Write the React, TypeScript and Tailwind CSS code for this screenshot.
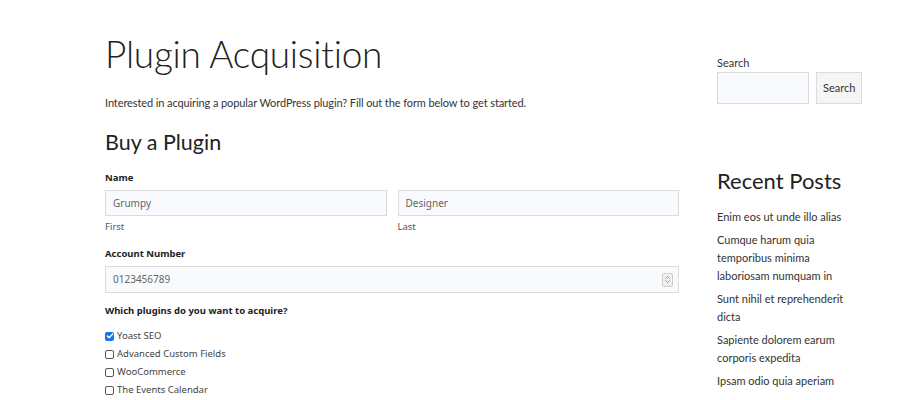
import { Check, ChevronsUpDown } from "lucide-react";

const plugins = [
  { label: "Yoast SEO", checked: true },
  { label: "Advanced Custom Fields", checked: false },
  { label: "WooCommerce", checked: false },
  { label: "The Events Calendar", checked: false },
];

const posts = [
  "Enim eos ut unde illo alias",
  "Cumque harum quia temporibus minima laboriosam numquam in",
  "Sunt nihil et reprehenderit dicta",
  "Sapiente dolorem earum corporis expedita",
  "Ipsam odio quia aperiam",
];

function Field({ value, className = "" }: { value: string; className?: string }) {
  return (
    <div
      className={`flex h-[26px] items-center border border-[#dcdcdc] bg-[#f8fafd] px-[7px] text-[10px] text-[#666] ${className}`}
    >
      {value}
    </div>
  );
}

export default function App() {
  return (
    <div className="h-[400px] w-[900px] overflow-hidden bg-white font-['Lato',sans-serif] text-[#333]">
      <div className="flex pl-[105px] pr-[38px]">

        <main className="w-[574px] pt-[30px]">
          <h1 className="text-[37px] font-light leading-[48px] tracking-[-0.25px] text-[#222]">
            Plugin Acquisition
          </h1>

          <p className="mt-[16px] text-[11px] leading-[18px] tracking-[-0.1px]">
            Interested in acquiring a popular WordPress plugin? Fill out the form below to get started.
          </p>

          <h2 className="mt-[16px] text-[21.5px] leading-[28px] text-[#222]">
            Buy a Plugin
          </h2>

          <div className="mt-[15px] font-['Noto_Sans',sans-serif]">
            <div className="text-[9.5px] font-bold leading-[14px] text-[#222]">Name</div>
            <div className="mt-[5px] grid grid-cols-2 gap-[11px]">
              <div>
                <Field value="Grumpy" />
                <div className="mt-[4px] text-[9.5px] leading-[14px] text-[#555]">First</div>
              </div>
              <div>
                <Field value="Designer" />
                <div className="mt-[4px] text-[9.5px] leading-[14px] text-[#555]">Last</div>
              </div>
            </div>

            <div className="mt-[13px] text-[9.5px] font-bold leading-[14px] text-[#222]">
              Account Number
            </div>
            <div className="mt-[5px] flex h-[27px] items-center justify-between border border-[#dcdcdc] bg-[#f8fafd] pl-[7px] pr-[5px] text-[10px] text-[#666]">
              <span>0123456789</span>
              <span className="flex h-[14px] w-[11px] items-center justify-center rounded-[2px] border border-[#ccc] bg-[#f0f0f0]">
                <ChevronsUpDown className="h-[9px] w-[9px] text-[#777]" strokeWidth={2} />
              </span>
            </div>

            <div className="mt-[11px] text-[9.5px] font-bold leading-[14px] text-[#222]">
              Which plugins do you want to acquire?
            </div>
            <div className="mt-[9px] flex flex-col">
              {plugins.map((p) => (
                <label key={p.label} className="flex h-[18px] items-center gap-[3px] text-[9.5px] text-[#444]">
                  {p.checked ? (
                    <span className="flex h-[9px] w-[9px] items-center justify-center rounded-[2px] bg-[#1a73e8]">
                      <Check className="h-[8px] w-[8px] text-white" strokeWidth={4} />
                    </span>
                  ) : (
                    <span className="h-[9px] w-[9px] rounded-[2px] border border-[#555] bg-white" />
                  )}
                  {p.label}
                </label>
              ))}
            </div>
          </div>
        </main>

        <aside className="ml-[38px] w-[145px] pt-[56px]">
          <div className="text-[11px] leading-[14px] text-[#333]">Search</div>
          <div className="mt-[2px] flex gap-[7px]">
            <div className="h-[32px] w-[93px] border border-[#dcdcdc] bg-[#f8fafd]" />
            <button className="h-[32px] w-[46px] border border-[#dcdcdc] bg-[#f5f5f5] text-[11px] text-[#333]">
              Search
            </button>
          </div>

          <h2 className="mt-[63px] text-[22px] leading-[28px] text-[#222]">Recent Posts</h2>

          <ul className="mt-[13px] flex flex-col gap-[5px] text-[11px] leading-[18px] text-[#333]">
            {posts.map((post) => (
              <li key={post}>{post}</li>
            ))}
          </ul>
        </aside>

      </div>
    </div>
  );
}
